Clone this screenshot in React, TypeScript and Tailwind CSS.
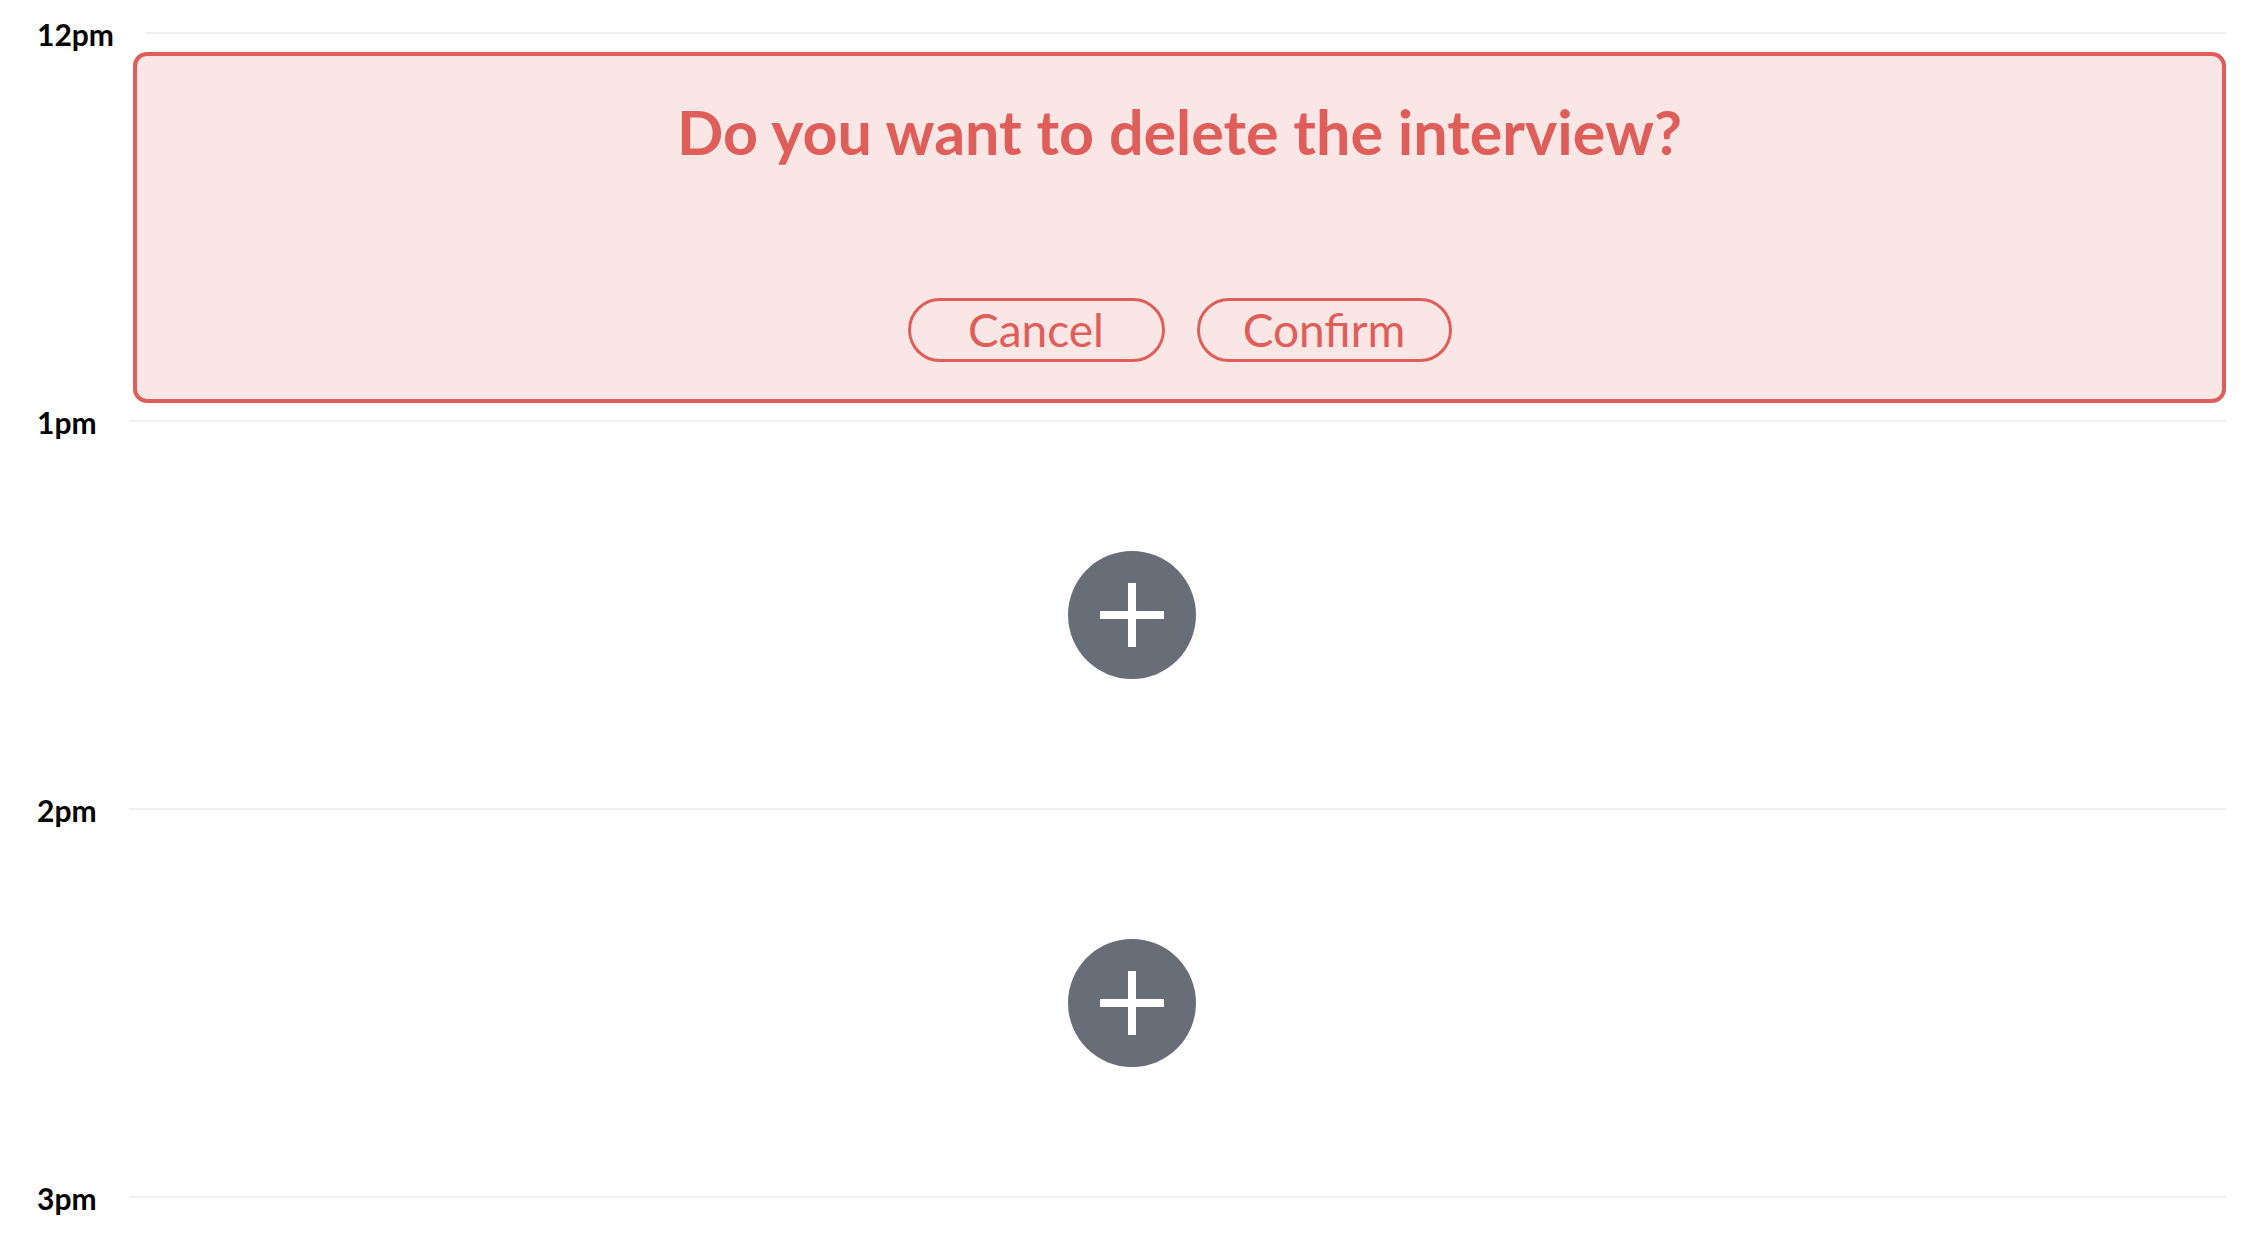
import React from "react";

const RED = "#e05e5a";

function HourRow({ label }: { label: string }) {
  return (
    <div className="flex h-[28px] items-center gap-[32px]">
      <span className="text-[30px] font-bold leading-none text-black [font-family:Lato,'Liberation_Sans',sans-serif] translate-y-[1px]">
        {label}
      </span>
      <div className="h-[2px] flex-1 bg-[#efefef]" />
    </div>
  );
}

function PlusButton() {
  return (
    <button className="flex h-[128px] w-[128px] items-center justify-center rounded-full bg-[#686e78]">
      <svg width="64" height="64" viewBox="0 0 64 64">
        <rect x="0" y="28" width="64" height="8" fill="#ffffff" />
        <rect x="28" y="0" width="8" height="64" fill="#ffffff" />
      </svg>
    </button>
  );
}

export default function App() {
  return (
    <div className="min-h-[1240px] w-full bg-white pl-[37px] pr-[26px] pt-[19px] [font-family:Lato,'Liberation_Sans',sans-serif]">
      <HourRow label="12pm" />
      <div className="h-[360px] pl-[96px] pt-[5px]">
        <div
          className="flex h-[351px] flex-col items-center justify-between rounded-[14px] border-4 bg-[#fae6e5] pb-[37px] pt-[45px]"
          style={{ borderColor: RED }}
        >
          <h2 className="text-[61px] font-bold leading-none text-[#e05e5a]">
            Do you want to delete the interview?
          </h2>
          <div className="flex gap-[32px]">
            <button className="h-[64px] w-[257px] rounded-full border-[3px] border-[#e05e5a] text-[46px] leading-none text-[#e05e5a]">
              Cancel
            </button>
            <button className="h-[64px] w-[255px] rounded-full border-[3px] border-[#e05e5a] text-[46px] leading-none text-[#e05e5a]">
              Confirm
            </button>
          </div>
        </div>
      </div>
      <HourRow label="1pm" />
      <div className="flex h-[360px] items-center justify-center">
        <PlusButton />
      </div>
      <HourRow label="2pm" />
      <div className="flex h-[360px] items-center justify-center">
        <PlusButton />
      </div>
      <HourRow label="3pm" />
    </div>
  );
}
